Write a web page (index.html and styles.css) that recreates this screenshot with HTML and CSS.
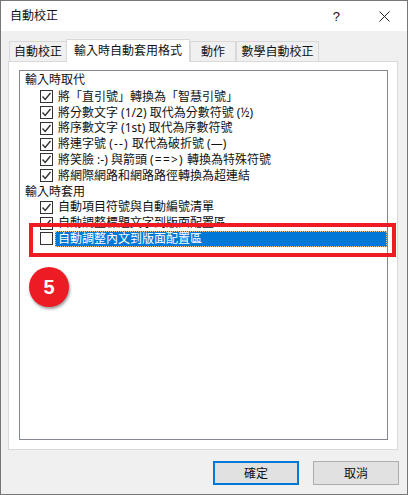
FILE: index.html
```html
<!DOCTYPE html>
<html lang="zh-Hant">
<head>
<meta charset="utf-8">
<title>自動校正</title>
<link rel="stylesheet" href="styles.css">
</head>
<body>
<div class="dialog">
  <header class="titlebar">
    <span class="title">自動校正</span>
    <span class="help">?</span>
    <svg class="close" width="11" height="11" viewBox="0 0 11 11"><path d="M0.5 0.5L10.5 10.5M10.5 0.5L0.5 10.5" stroke="#222" stroke-width="1" fill="none"/></svg>
  </header>
  <main class="body">
    <nav class="tabs">
      <div class="tab t1">自動校正</div>
      <div class="tab active">輸入時自動套用格式</div>
      <div class="tab t3">動作</div>
      <div class="tab t4">數學自動校正</div>
    </nav>
    <section class="panel">
      <div class="box">
        <div class="group first">輸入時取代</div>
        <div class="row"><span class="cb on"><svg viewBox="0 0 11 11"><path d="M1.5 5.5L4.2 8.5L9.5 2" /></svg></span><span class="lb">將「直引號」轉換為「智慧引號」</span></div>
        <div class="row"><span class="cb on"><svg viewBox="0 0 11 11"><path d="M1.5 5.5L4.2 8.5L9.5 2" /></svg></span><span class="lb">將分數文字 (1/2) 取代為分數符號 (½)</span></div>
        <div class="row"><span class="cb on"><svg viewBox="0 0 11 11"><path d="M1.5 5.5L4.2 8.5L9.5 2" /></svg></span><span class="lb">將序數文字 (1st) 取代為序數符號</span></div>
        <div class="row"><span class="cb on"><svg viewBox="0 0 11 11"><path d="M1.5 5.5L4.2 8.5L9.5 2" /></svg></span><span class="lb">將連字號 <span class="wide">(--)</span> 取代為破折號 (—)</span></div>
        <div class="row"><span class="cb on"><svg viewBox="0 0 11 11"><path d="M1.5 5.5L4.2 8.5L9.5 2" /></svg></span><span class="lb">將笑臉 :-) 與箭頭 <span class="wide">(==&gt;)</span> 轉換為特殊符號</span></div>
        <div class="row"><span class="cb on"><svg viewBox="0 0 11 11"><path d="M1.5 5.5L4.2 8.5L9.5 2" /></svg></span><span class="lb">將網際網路和網路路徑轉換為超連結</span></div>
        <div class="group">輸入時套用</div>
        <div class="row"><span class="cb on"><svg viewBox="0 0 11 11"><path d="M1.5 5.5L4.2 8.5L9.5 2" /></svg></span><span class="lb">自動項目符號與自動編號清單</span></div>
        <div class="row"><span class="cb on"><svg viewBox="0 0 11 11"><path d="M1.5 5.5L4.2 8.5L9.5 2" /></svg></span><span class="lb">自動調整標題文字到版面配置區</span></div>
        <div class="row"><span class="cb"></span><span class="lb selected">自動調整內文到版面配置區</span></div>
      </div>
    </section>
    <footer class="buttons">
      <button class="btn default">確定</button>
      <button class="btn">取消</button>
    </footer>
    <div class="highlight"></div>
    <div class="badge">5</div>
  </main>
</div>
</body>
</html>
```
FILE: styles.css
```css
* { box-sizing: border-box; }
html, body { margin: 0; padding: 0; }
body {
  width: 408px;
  height: 495px;
  overflow: hidden;
  font-family: "Noto Sans", "Noto Sans CJK TC", "Liberation Sans", sans-serif;
  font-size: 12px;
  color: #111;
}
.dialog {
  width: 408px;
  height: 495px;
  border: 1px solid #777;
  display: flex;
  flex-direction: column;
  background: #f0f0f0;
}
.titlebar {
  height: 30px;
  background: #fff;
  display: flex;
  align-items: center;
  padding-left: 9px;
  flex: none;
}
.title { line-height: 30px; }
.help { margin-left: auto; font-family: "Liberation Sans", sans-serif; font-size: 13px; margin-right: 39px; }
.close { margin-right: 17px; }
.body { position: relative; flex: 1; padding: 0 9px 0 7px; }
.tabs {
  display: flex;
  align-items: flex-end;
  height: 30px;
  padding-left: 2px;
  position: relative;
  z-index: 1;
}
.tab {
  height: 20px;
  line-height: 19px;
  border: 1px solid #d9d9d9;
  border-bottom: none;
  background: #f0f0f0;
  text-align: center;
  margin-left: -1px;
}
.t1 { width: 58px; }
.t3 { width: 46px; margin-left: 0; }
.t4 { width: 83px; margin-left: 0; }
.tab.active {
  height: 23px;
  width: 124px;
  line-height: 21px;
  background: #fff;
  margin-bottom: -1px;
  border-color: #d9d9d9;
}
.panel {
  height: 389px;
  width: 390px;
  background: #fff;
  border: 1px solid #d9d9d9;
  padding: 8px 9px 9px 10px;
}
.box {
  height: 370px;
  width: 369px;
  border: 1px solid #828790;
  padding: 1px 0 0 5px;
}
.group { height: 15.8px; line-height: 15.8px; }
.group.first { margin-bottom: 1px; }
.row {
  height: 15.8px;
  display: flex;
  align-items: center;
  padding-left: 15px;
}
.cb {
  width: 13px;
  height: 13px;
  border: 1px solid #333;
  background: #fff;
  flex: none;
  display: block;
}
.cb svg { display: block; width: 11px; height: 11px; fill: none; stroke: #333; stroke-width: 1.4; }
.lb { margin-left: 2px; padding-left: 3px; line-height: 16px; white-space: nowrap; height: 16px; }
.wide { letter-spacing: 1.2px; }
.selected {
  flex: 1;
  background: #0078d7;
  color: #fff;
  outline: 1px dotted #f5c77e;
  outline-offset: -1px;
}
.buttons {
  display: flex;
  justify-content: flex-end;
  gap: 14px;
  padding: 11px 0 0;
  width: 391px;
}
.btn {
  width: 86px;
  height: 24px;
  padding: 0;
  border: 1px solid #adadad;
  background: #e1e1e1;
  font: inherit;
  color: #111;
}
.btn.default { border: 2px solid #0078d7; }
.highlight {
  position: absolute;
  left: 28px;
  top: 192px;
  width: 367px;
  height: 34px;
  border: 4px solid #ed1c24;
}
.badge {
  position: absolute;
  left: 28px;
  top: 236px;
  width: 40px;
  height: 40px;
  border-radius: 50%;
  background: #ed1c24;
  color: #fff;
  font: bold 20px/40px "Liberation Sans", sans-serif;
  text-align: center;
  box-shadow: 1px 2px 3px rgba(0,0,0,.4);
}
```
